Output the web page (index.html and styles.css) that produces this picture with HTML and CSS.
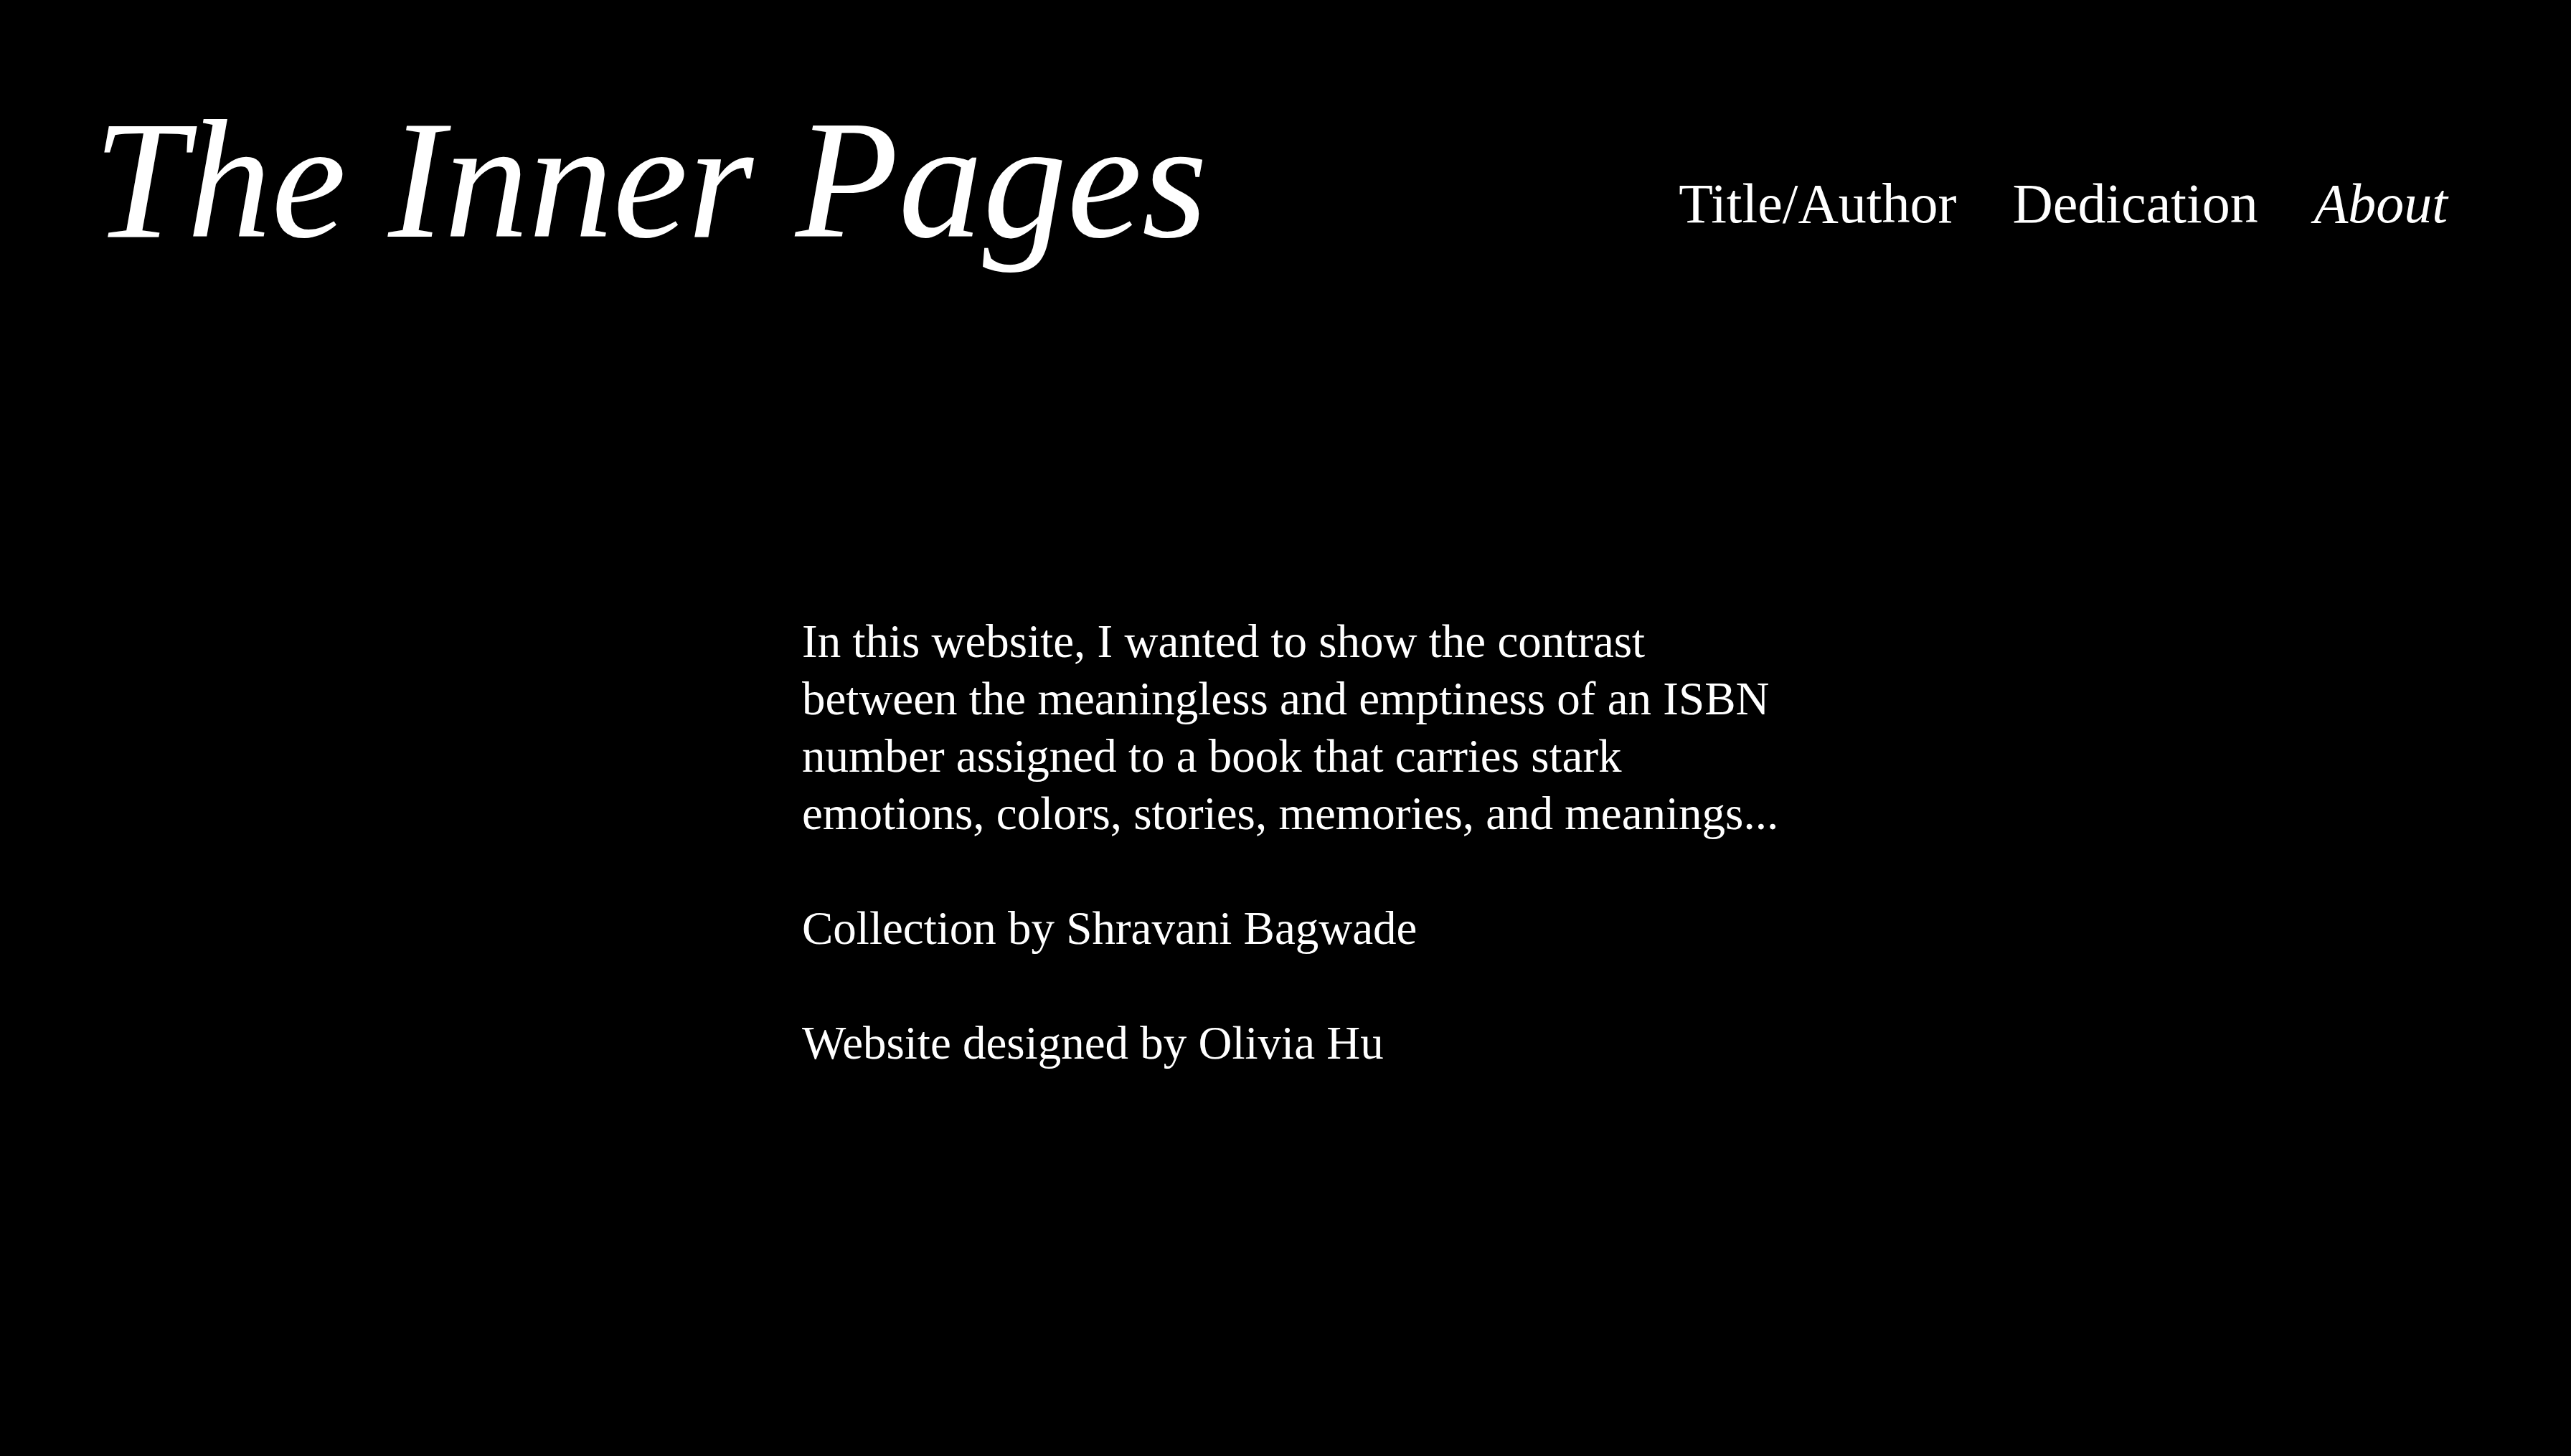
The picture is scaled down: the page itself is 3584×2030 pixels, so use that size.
FILE: index.html
```html
<!DOCTYPE html>
<html lang="en">
<head>
<meta charset="utf-8">
<title>The Inner Pages</title>
<link rel="stylesheet" href="styles.css">
</head>
<body>
<header class="site-header">
  <h1 class="site-title">The Inner Pages</h1>
  <nav class="site-nav">
    <a class="nav-link" href="#">Title/Author</a>
    <a class="nav-link" href="#">Dedication</a>
    <a class="nav-link nav-link--active" href="#">About</a>
  </nav>
</header>
<main class="about">
  <p class="about-text">In this website, I wanted to show the contrast between the meaningless and emptiness of an ISBN number assigned to a book that carries stark emotions, colors, stories, memories, and meanings...</p>
  <p class="about-text">Collection by Shravani Bagwade</p>
  <p class="about-text">Website designed by Olivia Hu</p>
</main>
</body>
</html>
```
FILE: styles.css
```css
html, body {
  margin: 0;
  padding: 0;
  background: #000;
  color: #fff;
  font-family: "Liberation Serif", "Times New Roman", serif;
}

body {
  min-height: 2030px;
}

.site-header {
  display: flex;
  justify-content: space-between;
  align-items: flex-start;
  padding: 134px 172px 0 130px;
}

.site-title {
  margin: 0;
  font-size: 235px;
  line-height: 1;
  font-style: italic;
  font-weight: 400;
}

.site-nav {
  display: flex;
  gap: 78px;
  padding-top: 111px;
}

.nav-link {
  color: #fff;
  text-decoration: none;
  font-size: 78px;
  line-height: 1;
}

.nav-link--active {
  font-style: italic;
}

.about {
  padding: 485px 0 0 1118px;
}

.about-text {
  margin: 0 0 80px;
  width: 1365px;
  font-size: 65px;
  line-height: 80px;
}
```
